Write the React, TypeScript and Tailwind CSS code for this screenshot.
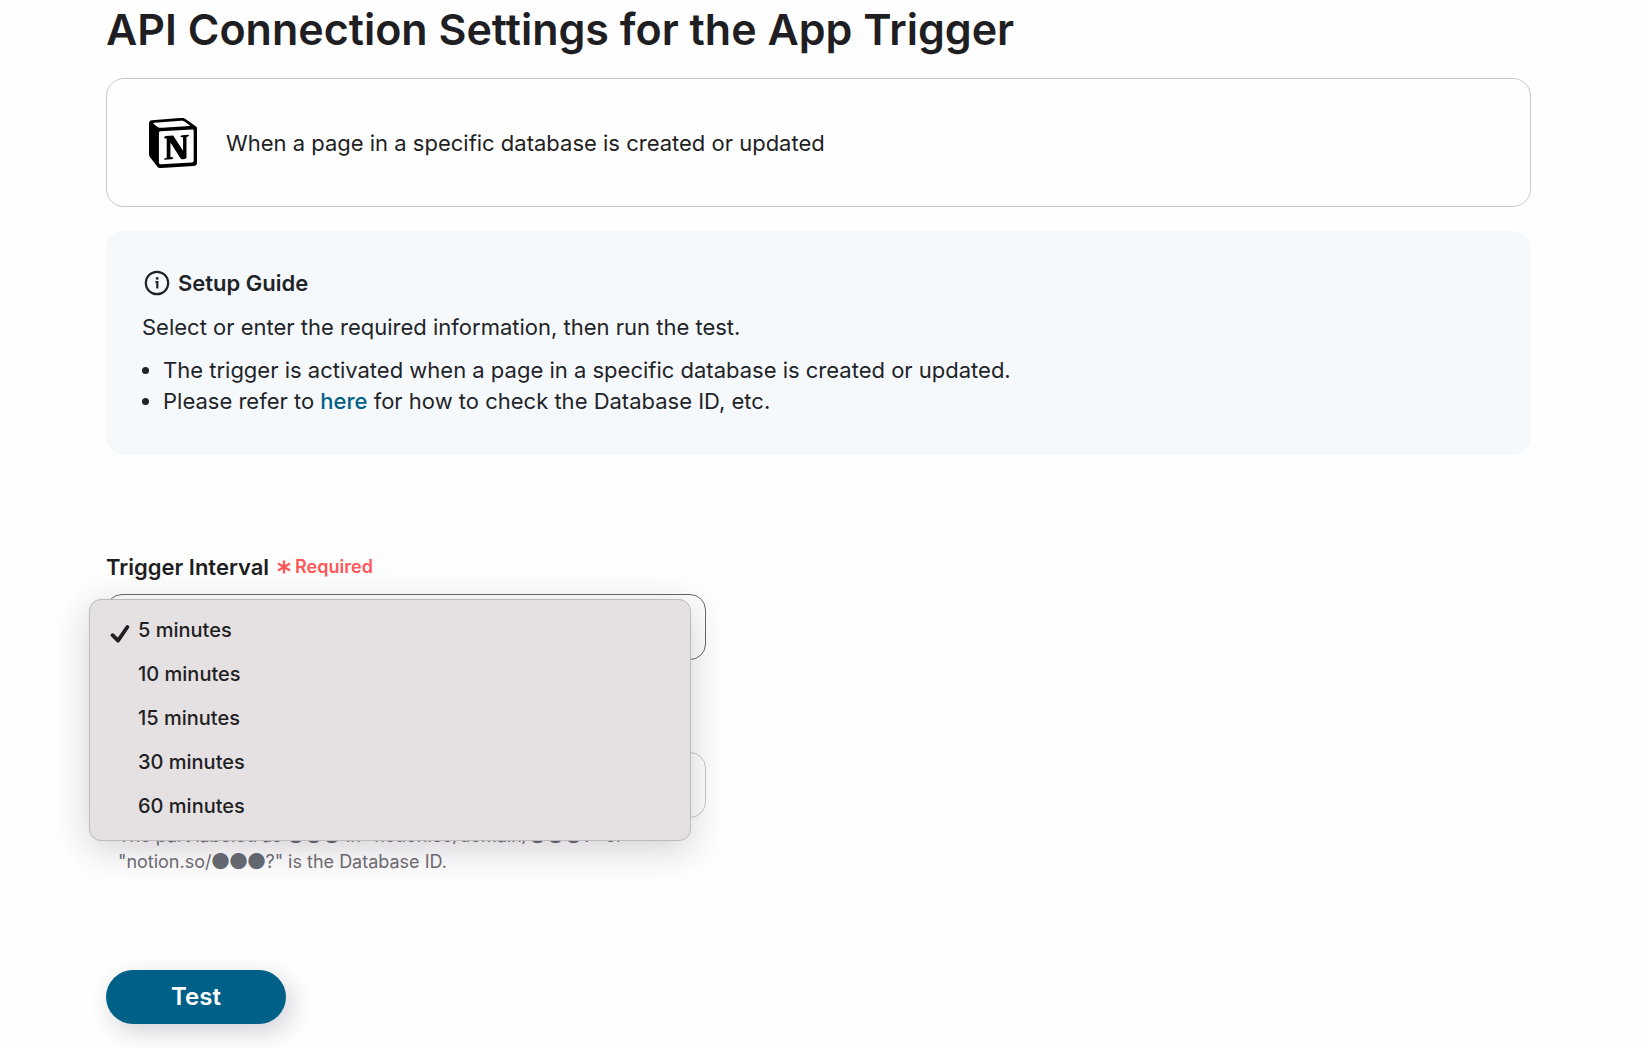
import { useState } from "react";
import { SiNotion } from "react-icons/si";

const intervals = ["5 minutes", "10 minutes", "15 minutes", "30 minutes", "60 minutes"];

function Dots() {
  return <span className="font-['Noto_Sans_CJK_JP',sans-serif] text-[#666b73]">●●●</span>;
}

function InfoIcon() {
  return (
    <svg viewBox="0 0 30 30" className="size-[30px]" fill="none" stroke="currentColor" strokeWidth="2.2" aria-hidden="true">
      <circle cx="15" cy="15" r="11.2" />
      <path d="M13.4 14H15.3V20.4" />
      <circle cx="15.2" cy="10.4" r="1.4" fill="currentColor" stroke="none" />
    </svg>
  );
}

function CheckIcon() {
  return (
    <svg
      viewBox="0 0 20 20"
      className="size-5 translate-y-1"
      fill="none"
      stroke="currentColor"
      strokeWidth="3.8"
      strokeLinecap="round"
      strokeLinejoin="round"
      aria-hidden="true"
    >
      <path d="M2.6 11.2L8 16.6L17.4 3" />
    </svg>
  );
}

function AsteriskIcon() {
  return (
    <svg viewBox="0 0 14 14" className="size-3.5" fill="none" stroke="currentColor" strokeWidth="2.3" aria-hidden="true">
      <path d="M7 0.4V13.6M1 3.6L13 10.4M13 3.6L1 10.4" />
    </svg>
  );
}

function IntervalField() {
  const [interval, setInterval] = useState(intervals[0]);
  const [open, setOpen] = useState(true);

  return (
    <div>
      <div className="flex items-center gap-2">
        <label htmlFor="interval" className="text-[22px] leading-[30px] font-semibold">
          Trigger Interval
        </label>
        <span className="flex items-center gap-1 text-lg leading-[30px] font-semibold text-[#ff5757]">
          <AsteriskIcon />
          Required
        </span>
      </div>

      <div className="relative mt-3">
        <select
          id="interval"
          value={interval}
          onChange={(e) => setInterval(e.target.value)}
          onClick={() => setOpen(true)}
          className="h-[66px] w-full appearance-none rounded-2xl border border-[#69666c] bg-transparent px-6 text-[20px]"
        >
          {intervals.map((item) => (
            <option key={item}>{item}</option>
          ))}
        </select>

        {open && (
          <div
            role="listbox"
            aria-label="Trigger Interval"
            className="absolute top-[5px] right-[15px] -left-[17px] z-10 rounded-xl border border-[#bdb9bc] bg-[#e5e1e2] pt-2 pb-3 shadow-[0_8px_36px_rgba(60,40,70,0.22)]"
          >
            {intervals.map((item) => (
              <button
                key={item}
                type="button"
                role="option"
                aria-selected={item === interval}
                onClick={() => {
                  setInterval(item);
                  setOpen(false);
                }}
                className="flex h-11 w-full items-center gap-2 pl-5 text-left text-[20px] font-medium"
              >
                <span className="size-5">{item === interval && <CheckIcon />}</span>
                {item}
              </button>
            ))}
          </div>
        )}
      </div>
    </div>
  );
}

export default function App() {
  return (
    <main className="min-h-screen bg-[#fefefe] pr-[117px] pb-6 pl-[106px] font-['Inter',sans-serif] text-[#1f1f23]">
      <h1 className="pt-1 text-[43px] leading-[50px] font-semibold">
        API Connection Settings for the App Trigger
      </h1>

      <section className="mt-6 flex h-[129px] items-center gap-7 rounded-[18px] border border-[#c9c6cc] pl-[41px] text-[22px] leading-8">
        <SiNotion className="size-[50px] text-black" aria-hidden="true" />
        <p>When a page in a specific database is created or updated</p>
      </section>

      <section className="mt-6 rounded-[18px] bg-[#f5f9fc] px-9 pt-9 pb-[38px] text-[22px] leading-8 text-[#1f2428]">
        <h2 className="flex items-center gap-1.5 font-semibold">
          <InfoIcon />
          Setup Guide
        </h2>
        <p className="mt-3">Select or enter the required information, then run the test.</p>
        <ul className="mt-3 list-disc pl-[21px] leading-[31px]">
          <li>The trigger is activated when a page in a specific database is created or updated.</li>
          <li>
            Please refer to{" "}
            <a href="#database-id" className="font-medium text-[#006087]">
              here
            </a>{" "}
            for how to check the Database ID, etc.
          </li>
        </ul>
      </section>

      <form className="mt-[97px]" onSubmit={(e) => e.preventDefault()}>
        <div className="max-w-[600px]">
          <IntervalField />

          <input
            id="database-id"
            type="text"
            aria-label="Database ID"
            className="mt-[92px] h-[66px] w-full rounded-2xl border border-[#c9c6cc] px-6 text-[20px]"
          />
          <p className="mt-1 px-3 text-lg leading-[25px] text-[#706d74]">
            The part labeled as <Dots /> in "notion.so/domain/
            <Dots />?" or
            <br />
            "notion.so/
            <Dots />?" is the Database ID.
          </p>
        </div>

        <button
          type="submit"
          className="mt-24 h-[54px] w-[180px] rounded-full bg-[#006087] text-2xl font-semibold text-white shadow-[6px_8px_24px_rgba(40,40,70,0.2)]"
        >
          Test
        </button>
      </form>
    </main>
  );
}
